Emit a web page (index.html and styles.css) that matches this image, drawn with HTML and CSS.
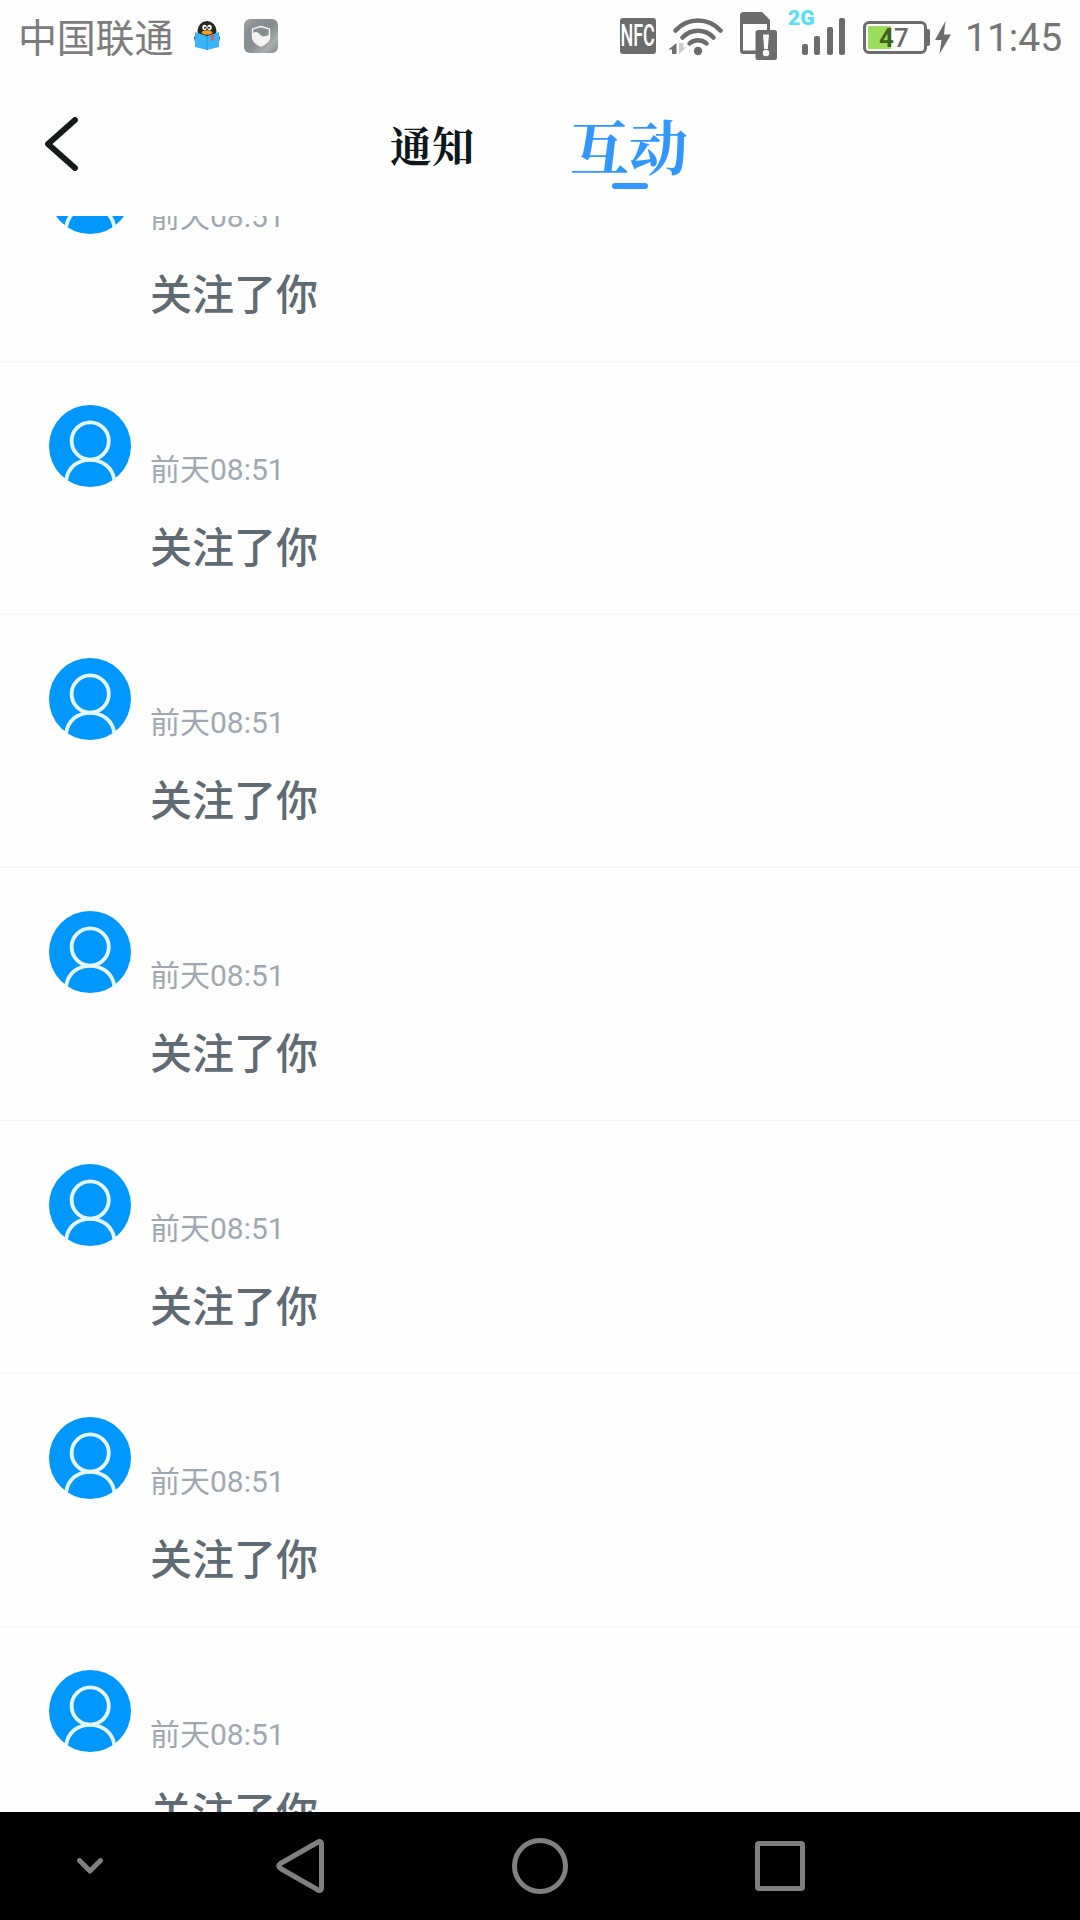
FILE: index.html
```html
<!DOCTYPE html>
<html lang="zh-CN">
<head>
  <meta charset="UTF-8" />
  <meta name="viewport" content="width=device-width, initial-scale=1.0"/>
  <title>互动</title>
  <link rel="stylesheet" href="styles.css">
</head>
<body>
  <svg class="defs">
    <symbol id="user" viewBox="0 0 82 82">
      <circle cx="41" cy="41" r="41" fill="#0098ff"/>
      <g fill="none" stroke="#e6f6ff" stroke-width="3.8">
        <circle cx="41.200" cy="36" r="18.600"/>
        <path d="M17 75.500C19 62 29 54.800 41 54.800S63.500 62 65.500 75.500"/>
      </g>
    </symbol>
  </svg>

  <div class="phone">
    <div class="status-bar">
      <span class="carrier">中国联通</span>
      <svg class="app-icon reader" viewBox="0 0 34 34">
        <ellipse cx="17" cy="12" rx="9.500" ry="10" fill="#262626"/>
        <path d="M4 18l4-3v8H5zM30 18l-4-3v8h3z" fill="#262626"/>
        <ellipse cx="14.500" cy="8.500" rx="2.200" ry="2.700" fill="#fff"/>
        <ellipse cx="19.500" cy="8.500" rx="2.200" ry="2.700" fill="#fff"/>
        <circle cx="15" cy="8.800" r="1" fill="#222"/>
        <circle cx="19" cy="8.800" r="1" fill="#222"/>
        <path d="M5 13l12 4 12-4v15l-12 3-12-3z" fill="#39b5f7"/>
        <ellipse cx="17" cy="13.500" rx="5.500" ry="2.200" fill="#f9a01b"/>
        <path d="M17 17v14" stroke="#1c95dc" stroke-width="1"/>
        <path d="M21 16l3-1v7l-1.500-1-1.500 1.500z" fill="#d0607e"/>
      </svg>
      <svg class="app-icon guard" viewBox="0 0 34 34">
        <defs>
          <linearGradient id="metal" x1="0" y1="0" x2="1" y2="1">
            <stop offset="0" stop-color="#a4a9ab"/>
            <stop offset=".2" stop-color="#8c9295"/>
            <stop offset=".5" stop-color="#858c8f"/>
            <stop offset=".78" stop-color="#a9adaf"/>
            <stop offset="1" stop-color="#858b8e"/>
          </linearGradient>
        </defs>
        <rect width="34" height="34" rx="6" fill="url(#metal)"/>
        <path d="M17 7.500l8.500 2.500v8c0 4-3.500 7-8.500 9-5-2-8.500-5-8.500-9v-8z" fill="none" stroke="#f2f2f2" stroke-width="1.400"/>
        <path d="M9 14c3-2 5-1 7 1.500s5 2.500 9 .5v2c0 4-3 6.500-8 8.500-5-2-8-4.500-8-8.500z" fill="#f2f2f2"/>
      </svg>

      <div class="status-right">
        <span class="nfc"><b>NFC</b></span>
        <svg class="wifi" viewBox="0 0 55 38">
          <g fill="none" stroke="#6c6c6c" stroke-width="4.500" stroke-linecap="round">
            <path d="M7.500 12.500C20-.8 40-.8 52.500 12.500"/>
            <path d="M14.500 19.500C23 10.500 37 10.500 45.500 19.500"/>
            <path d="M21.500 25.500C26 21 34 21 38.500 25.500"/>
          </g>
          <circle cx="30" cy="33" r="4.200" fill="#6c6c6c"/>
          <path d="M8.500 36V25L.5 31.500H4V36z" fill="#6c6c6c"/>
          <path d="M11 25v11l7-6.500h-2.500V25z" fill="#ccc"/>
        </svg>
        <svg class="sim" viewBox="0 0 38 48">
          <path d="M3.500 0H22l8 8v14h-3V12H3v26.500h14V42H3.500A3.500 3.500 0 0 1 0 38.500v-35A3.500 3.500 0 0 1 3.500 0z" fill="#6c6c6c"/>
          <rect x="15.500" y="18" width="21.500" height="30" rx="2.500" fill="#6c6c6c"/>
          <path d="M23 22.500h6l-1.200 14.500h-3.600z" fill="#fff"/>
          <circle cx="26" cy="41" r="3.200" fill="#fff"/>
        </svg>
        <div class="signal">
          <span class="net">2G</span>
          <i class="bar b1"></i><i class="bar b2"></i><i class="bar b3"></i><i class="bar b4"></i>
        </div>
        <div class="battery">
          <div class="level"></div>
          <span class="percent"><b>4</b>7</span>
        </div>
        <svg class="bolt" viewBox="0 0 16 33">
          <path d="M10.500 0L0 19h6.500L4.500 33 16 13.500H9z" fill="#6c6c6c"/>
        </svg>
        <span class="clock">11:45</span>
      </div>
    </div>

    <div class="header">
      <svg class="back" viewBox="0 0 34 54">
        <path d="M31 3L4 27 31 51" fill="none" stroke="#14191c" stroke-width="5.800" stroke-linecap="round" stroke-linejoin="round"/>
      </svg>
      <div class="tabs">
        <span class="tab">通知</span>
        <span class="tab active">互动</span>
      </div>
    </div>

    <div class="content">
      <div class="list">
        <div class="item">
          <svg class="avatar"><use href="#user"/></svg>
          <div class="info"><p class="time">前天08:51</p><p class="msg">关注了你</p></div>
        </div>
        <div class="item">
          <svg class="avatar"><use href="#user"/></svg>
          <div class="info"><p class="time">前天08:51</p><p class="msg">关注了你</p></div>
        </div>
        <div class="item">
          <svg class="avatar"><use href="#user"/></svg>
          <div class="info"><p class="time">前天08:51</p><p class="msg">关注了你</p></div>
        </div>
        <div class="item">
          <svg class="avatar"><use href="#user"/></svg>
          <div class="info"><p class="time">前天08:51</p><p class="msg">关注了你</p></div>
        </div>
        <div class="item">
          <svg class="avatar"><use href="#user"/></svg>
          <div class="info"><p class="time">前天08:51</p><p class="msg">关注了你</p></div>
        </div>
        <div class="item">
          <svg class="avatar"><use href="#user"/></svg>
          <div class="info"><p class="time">前天08:51</p><p class="msg">关注了你</p></div>
        </div>
        <div class="item">
          <svg class="avatar"><use href="#user"/></svg>
          <div class="info"><p class="time">前天08:51</p><p class="msg">关注了你</p></div>
        </div>
      </div>
    </div>

    <div class="nav-bar">
      <svg class="nav-down" viewBox="0 0 26 16"><path d="M2.500 2.500L13 13 23.500 2.500"/></svg>
      <svg class="nav-back" viewBox="0 0 48 54"><path d="M43 2.500L4.500 24.500Q1 27 4.500 29.500L43 51.500Q45.500 51.500 45.500 49V5Q45.500 2.500 43 2.500z"/></svg>
      <svg class="nav-home" viewBox="0 0 56 56"><circle cx="28" cy="28" r="25.500"/></svg>
      <svg class="nav-recent" viewBox="0 0 50 50"><rect x="2.500" y="2.500" width="45" height="45" rx="1.500"/></svg>
    </div>
  </div>
</body>
</html>
```

FILE: styles.css
```css
* {
  box-sizing: border-box;
}
html, body {
  margin: 0;
  padding: 0;
  height: 100%;
  overflow: hidden;
  font-family: Roboto, "Noto Sans CJK SC", sans-serif;
  background: #fefefe;
}
.defs {
  display: none;
}
.phone {
  width: 100%;
  height: 100vh;
  display: flex;
  flex-direction: column;
}

/* status bar */
.status-bar {
  height: 72px;
  display: flex;
  align-items: flex-start;
  padding: 0 18px;
  color: #757575;
}
.carrier {
  width: 158px;
  font-size: 39px;
  line-height: 72px;
  letter-spacing: -0.2px;
  margin-top: 3px;
  white-space: nowrap;
  color: #7c7c7c;
}
.app-icon {
  width: 34px;
  height: 34px;
  margin-top: 19px;
}
.reader {
  margin-left: 14px;
}
.guard {
  margin-left: 20px;
}
.status-right {
  display: flex;
  align-items: flex-start;
  margin-left: auto;
}
.nfc {
  width: 36px;
  height: 36px;
  margin-top: 18px;
  border-radius: 3px;
  background: #6c6c6c;
  color: #fff;
  display: flex;
  align-items: center;
  justify-content: center;
}
.nfc b {
  font-size: 31px;
  font-weight: 500;
  line-height: 36px;
  transform: scaleX(0.58);
}
.wifi {
  width: 55px;
  height: 38px;
  margin: 18px 0 0 12px;
}
.sim {
  width: 38px;
  height: 48px;
  margin: 12px 0 0 17px;
}
.signal {
  position: relative;
  width: 43px;
  height: 55px;
  margin-left: 24px;
  display: flex;
  align-items: flex-end;
  justify-content: space-between;
}
.net {
  position: absolute;
  left: -14px;
  top: 7px;
  font-size: 21px;
  line-height: 22px;
  font-weight: 900;
  color: #56e1f2;
}
.bar {
  width: 6px;
  border-radius: 2px;
  background: #6c6c6c;
}
.b1 { height: 11px; }
.b2 { height: 19px; }
.b3 { height: 28px; }
.b4 { height: 37px; }
.battery {
  position: relative;
  width: 64px;
  height: 33px;
  margin: 21px 0 0 18px;
  padding: 2px;
  border: 3px solid #6c6c6c;
  border-radius: 6px;
}
.battery::after {
  content: "";
  position: absolute;
  right: -6px;
  top: 5px;
  width: 4px;
  height: 17px;
  border-radius: 0 2px 2px 0;
  background: #6c6c6c;
}
.level {
  width: 23px;
  height: 23px;
  background: #9bdd5c;
}
.percent {
  position: absolute;
  left: 13px;
  top: 0;
  font-size: 26px;
  line-height: 28px;
  font-weight: 500;
  color: #6c6c6c;
}
.percent b {
  font-weight: 700;
  color: #42611f;
}
.bolt {
  width: 16px;
  height: 33px;
  margin: 21px 0 0 8px;
}
.clock {
  width: 97px;
  margin-left: 14px;
  font-size: 39px;
  line-height: 76px;
  text-align: right;
}

/* title tabs */
.header {
  height: 144px;
  display: flex;
  align-items: flex-start;
}
.back {
  width: 34px;
  height: 54px;
  margin: 45px 0 0 44px;
}
.tabs {
  display: flex;
  margin-left: 312px;
  font-family: "Noto Serif CJK SC", "Noto Serif SC", serif;
}
.tab {
  width: 84px;
  height: 120px;
  font-size: 42px;
  line-height: 145px;
  font-weight: 700;
  color: #10171b;
  white-space: nowrap;
}
.tab.active {
  width: 120px;
  margin-left: 96px;
  font-size: 59px;
  color: #3197ff;
  position: relative;
}
.tab.active::after {
  content: "";
  position: absolute;
  left: 42px;
  top: 111px;
  width: 36px;
  height: 6px;
  border-radius: 3px;
  background: #3197ff;
}

/* notification list */
.content {
  flex: 1;
  min-height: 0;
  overflow: hidden;
}
.list {
  margin-top: -107px; /* scrolled part of the first item */
}
.item {
  height: 253px;
  display: flex;
  padding: 43px 49px 0;
  border-bottom: 1px solid #f4f4f4;
}
.avatar {
  width: 82px;
  height: 82px;
  margin-right: 19px;
}
.time, .msg {
  margin: 0;
}
.time {
  margin-top: 45px;
  font-size: 30px;
  line-height: 40px;
  color: #9fa8b0;
}
.msg {
  margin-top: 29px;
  font-size: 42px;
  line-height: 60px;
  font-weight: 500;
  color: #5f6a72;
}

/* system navigation */
.nav-bar {
  height: 108px;
  background: #000;
  display: flex;
  align-items: center;
  padding-left: 77px;
}
.nav-bar svg {
  fill: none;
  stroke: #808080;
  stroke-width: 5;
  stroke-linecap: round;
  stroke-linejoin: round;
}
.nav-down {
  width: 26px;
  height: 16px;
}
.nav-back {
  width: 48px;
  height: 54px;
  margin-left: 173px;
}
.nav-home {
  width: 56px;
  height: 56px;
  margin-left: 188px;
}
.nav-recent {
  width: 50px;
  height: 50px;
  margin-left: 187px;
}
```
